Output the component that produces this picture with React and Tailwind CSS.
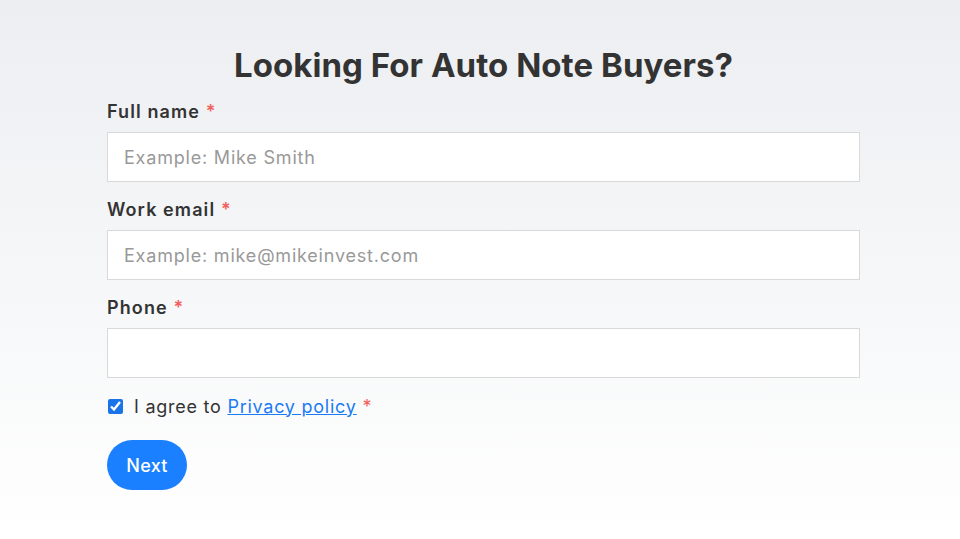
export default function App() {
  const font = { fontFamily: 'Inter, "Noto Sans", sans-serif' };
  return (
    <div className="min-h-[539px] w-full bg-gradient-to-b from-[#eceef1] to-[#ffffff]" style={font}>
      <div className="ml-[107px] w-[753px] pt-[41px]">
        <h1 className="text-center text-[33px] leading-[48px] font-bold text-[#333333] tracking-[0.05px]">
          Looking For Auto Note Buyers?
        </h1>
        <div className="mt-[9px] flex flex-col">
          <label className="text-[18px] leading-[27px] font-semibold text-[#333333] tracking-[1.1px]">
            Full name <span className="text-[#f25f5c]">*</span>
          </label>
          <input
            className="mt-[7px] h-[50px] w-full border border-[#d9d9d9] bg-white px-4 text-[18px] tracking-[0.8px] text-[#333] placeholder:text-[#999999] outline-none"
            placeholder="Example: Mike Smith"
          />
          <label className="mt-[14px] text-[18px] leading-[27px] font-semibold text-[#333333] tracking-[1.1px]">
            Work email <span className="text-[#f25f5c]">*</span>
          </label>
          <input
            className="mt-[7px] h-[50px] w-full border border-[#d9d9d9] bg-white px-4 text-[18px] tracking-[0.8px] text-[#333] placeholder:text-[#999999] outline-none"
            placeholder="Example: mike@mikeinvest.com"
          />
          <label className="mt-[14px] text-[18px] leading-[27px] font-semibold text-[#333333] tracking-[1.1px]">
            Phone <span className="text-[#f25f5c]">*</span>
          </label>
          <input className="mt-[7px] h-[50px] w-full border border-[#d9d9d9] bg-white px-4 text-[18px] outline-none" />
          <div className="mt-[16px] flex items-center h-[24px]">
            <input type="checkbox" defaultChecked className="ml-[1px] h-[15px] w-[15px] accent-[#1a73e8]" />
            <span className="ml-[11px] text-[18px] text-[#333333] tracking-[0.75px]">
              I agree to{" "}
              <a href="#" className="text-[#1a7cf5] underline">Privacy policy</a>{" "}
              <span className="text-[#f25f5c]">*</span>
            </span>
          </div>
          <div className="mt-[22px]">
            <button className="h-[50px] w-[80px] rounded-full bg-[#1a80ff] text-[18px] font-medium text-white tracking-[0.3px]">
              Next
            </button>
          </div>
        </div>
      </div>
    </div>
  );
}
